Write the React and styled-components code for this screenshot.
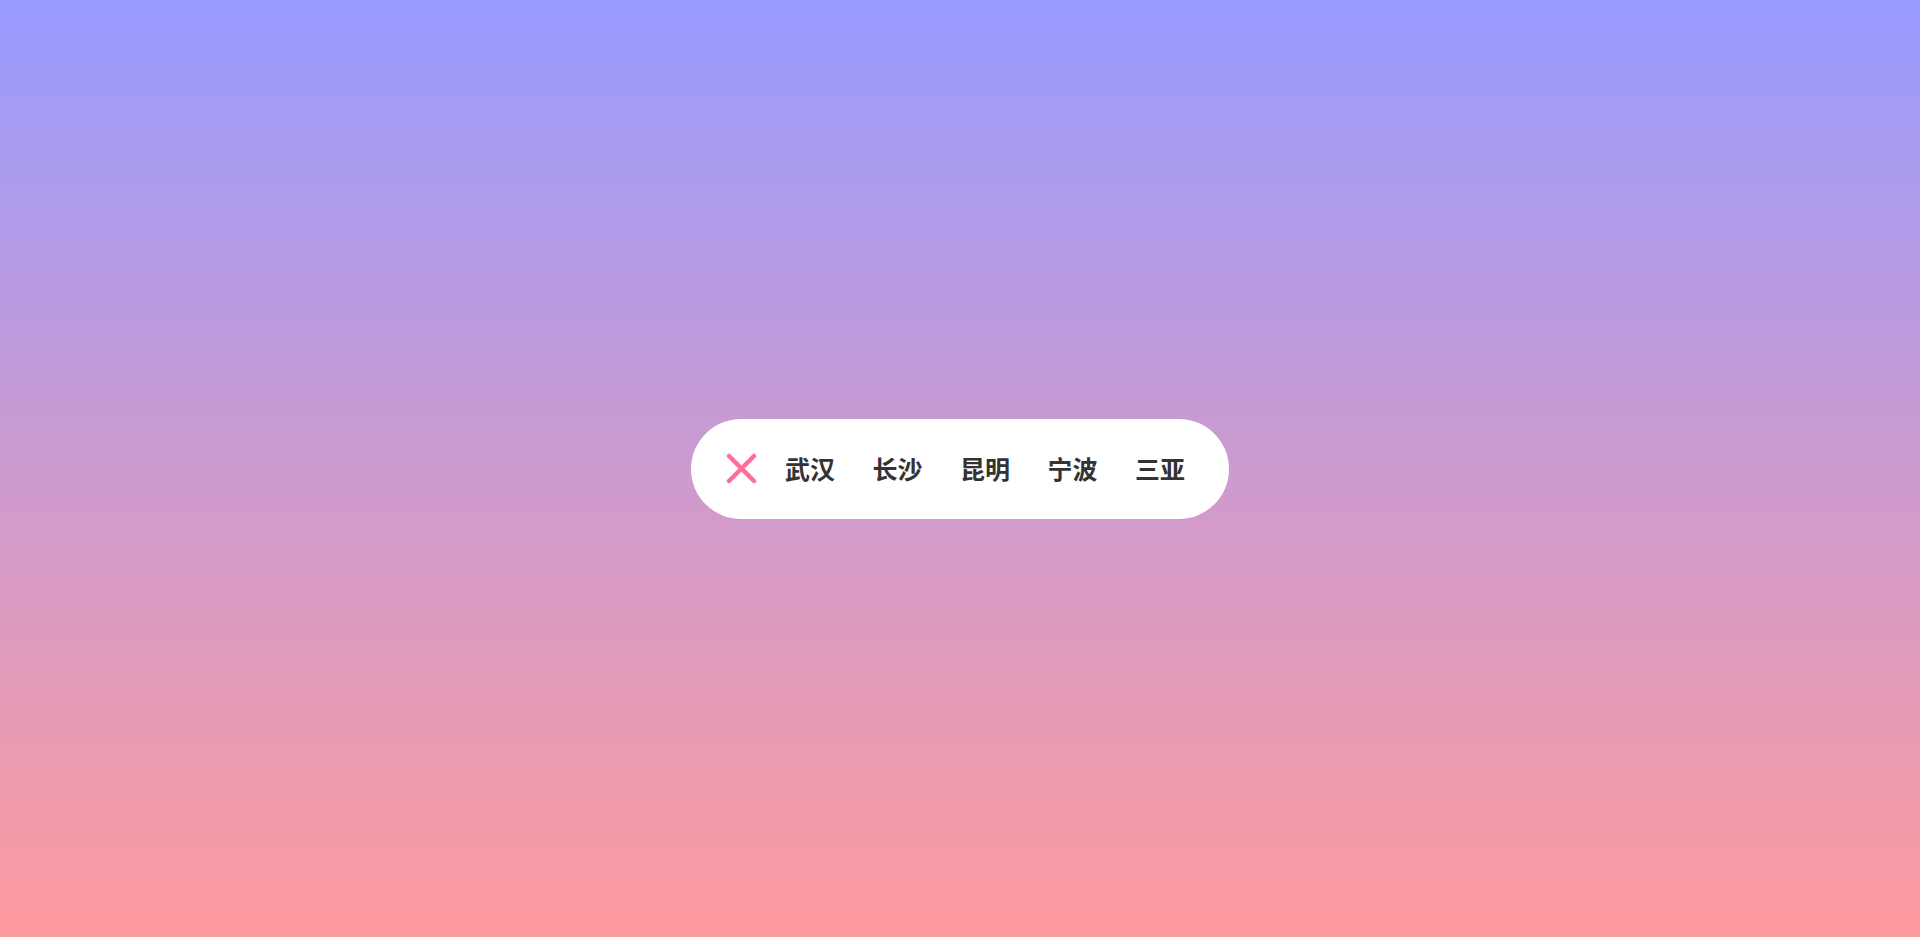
import React from "react";
import styled, { createGlobalStyle } from "styled-components";

const Global = createGlobalStyle`
  html, body { margin: 0; padding: 0; height: 100%; }
  body {
    font-family: "Noto Sans CJK SC", "Noto Sans", sans-serif;
  }
  #root { height: 100%; }
`;

const Page = styled.div`
  height: 100vh;
  display: flex;
  align-items: center;
  justify-content: center;
  background: linear-gradient(to bottom, #989bff 0%, #ff9a9e 100%);
`;

const Pill = styled.nav`
  box-sizing: border-box;
  height: 100px;
  width: 538px;
  border-radius: 50px;
  background: #ffffff;
  display: flex;
  align-items: center;
  padding: 0 0 0 35px;
`;

const Close = styled.button`
  width: 31px;
  height: 31px;
  padding: 0;
  border: none;
  background: transparent;
  display: flex;
  align-items: center;
  justify-content: center;
  margin-right: 28px;
  cursor: pointer;
`;

const Links = styled.ul`
  list-style: none;
  margin: 0;
  padding: 0;
  display: flex;
  align-items: center;
  gap: 37.5px;
`;

const Link = styled.li`
  font-family: "Noto Sans CJK SC", sans-serif;
  font-weight: 700;
  font-size: 25px;
  line-height: 1;
  color: #333333;
  cursor: pointer;
`;

const cities = ["武汉", "长沙", "昆明", "宁波", "三亚"];

export default function App() {
  return (
    <>
      <Global />
      <Page>
        <Pill>
          <Close aria-label="close">
            <svg width="31" height="31" viewBox="0 0 31 31">
              <path
                d="M3 3 L28 28 M28 3 L3 28"
                stroke="#ff6f93"
                strokeWidth="4.5"
                strokeLinecap="round"
                fill="none"
              />
            </svg>
          </Close>
          <Links>
            {cities.map((c) => (
              <Link key={c}>{c}</Link>
            ))}
          </Links>
        </Pill>
      </Page>
    </>
  );
}
